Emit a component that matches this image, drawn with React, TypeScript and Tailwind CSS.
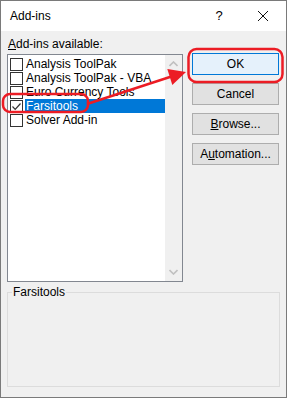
import React from 'react';

const ITEMS = [
  { label: 'Analysis ToolPak', checked: false },
  { label: 'Analysis ToolPak - VBA', checked: false },
  { label: 'Euro Currency Tools', checked: false },
  { label: 'Farsitools', checked: true, selected: true },
  { label: 'Solver Add-in', checked: false },
];

function Checkbox({ checked }: { checked: boolean }) {
  return (
    <div className="w-[13px] h-[13px] border border-[#333] bg-white flex items-center justify-center flex-shrink-0">
      {checked && (
        <svg width="11" height="11" viewBox="0 0 11 11">
          <path d="M1.5 5.5 L4.2 8.3 L9.5 2.5" fill="none" stroke="#333" strokeWidth="1.2" />
        </svg>
      )}
    </div>
  );
}

function Button({ children, primary }: { children: React.ReactNode; primary?: boolean }) {
  return (
    <button
      className={
        'w-[87px] h-[22px] text-[12px] text-black flex items-center justify-center border ' +
        (primary ? 'bg-[#e5f1fb] border-[#0078d7]' : 'bg-[#e1e1e1] border-[#adadad]')
      }
    >
      {children}
    </button>
  );
}

export default function App() {
  return (
    <div
      className="relative w-[287px] h-[398px] border border-[#7a7a7a] bg-[#f0f0f0] flex flex-col overflow-hidden text-black"
      style={{ fontFamily: '"Segoe UI", "Liberation Sans", Arial, sans-serif' }}
    >
      {/* Title bar */}
      <div className="h-[30px] bg-white flex items-center pl-[9px] flex-shrink-0">
        <span className="text-[12px] flex-1">Add-ins</span>
        <span className="text-[13px] w-[20px] text-center mr-[28px]">?</span>
        <svg width="12" height="12" viewBox="0 0 12 12" className="mr-[17px]">
          <path d="M1 1 L11 11 M11 1 L1 11" stroke="#111" strokeWidth="1" />
        </svg>
      </div>

      {/* Body */}
      <div className="flex px-[6px] pt-[6px]">
        <div className="w-[176px] flex flex-col">
          <div className="text-[12px] leading-[15px] pl-[1px] mb-[2px]">
            <span className="underline">A</span>dd-ins available:
          </div>
          <div className="h-[228px] border border-[#828790] bg-white flex">
            <div className="flex-1 pt-[2px] pl-[2px]">
              {ITEMS.map((it) => (
                <div key={it.label} className="h-[14px] flex items-center">
                  <Checkbox checked={it.checked} />
                  <span
                    className={
                      'ml-[2px] flex-1 h-[14px] pl-[1px] text-[12px] leading-[14px] whitespace-nowrap ' +
                      (it.selected ? 'bg-[#0078d7] text-white' : '')
                    }
                  >
                    {it.label}
                  </span>
                </div>
              ))}
            </div>
            {/* scrollbar */}
            <div className="w-[17px] bg-[#f0f0f0] flex flex-col justify-between items-center py-[6px]">
              <svg width="9" height="6" viewBox="0 0 9 6">
                <path d="M0.5 5 L4.5 1 L8.5 5" fill="none" stroke="#c0c0c0" strokeWidth="1.6" />
              </svg>
              <svg width="9" height="6" viewBox="0 0 9 6">
                <path d="M0.5 1 L4.5 5 L8.5 1" fill="none" stroke="#c0c0c0" strokeWidth="1.6" />
              </svg>
            </div>
          </div>
        </div>

        <div className="ml-[9px] pt-[16px] flex flex-col gap-[8px]">
          <Button primary>OK</Button>
          <Button>Cancel</Button>
          <Button>
            <span className="underline">B</span>rowse...
          </Button>
          <Button>
            A<span className="underline">u</span>tomation...
          </Button>
        </div>
      </div>

      {/* Description group */}
      <fieldset className="mx-[6px] mt-[3px] h-[102px] border border-[#dcdcdc] px-[4px]">
        <legend className="text-[12px] px-[1px] leading-[14px]">Farsitools</legend>
      </fieldset>

      {/* Annotation overlay */}
      <svg className="absolute left-0 top-0 pointer-events-none" width="287" height="398" viewBox="0 0 287 398">
        <rect x="2" y="93" width="85" height="18" rx="7" fill="none" stroke="#ec1c24" strokeWidth="2.5" />
        <rect x="187.5" y="48" width="94" height="33" rx="8" fill="none" stroke="#ec1c24" strokeWidth="2.5" />
        <line x1="86" y1="103" x2="172" y2="75" stroke="#ec1c24" strokeWidth="2.5" />
        <polygon points="185,71 171.3,84 166.3,68" fill="#ec1c24" />
      </svg>
    </div>
  );
}
